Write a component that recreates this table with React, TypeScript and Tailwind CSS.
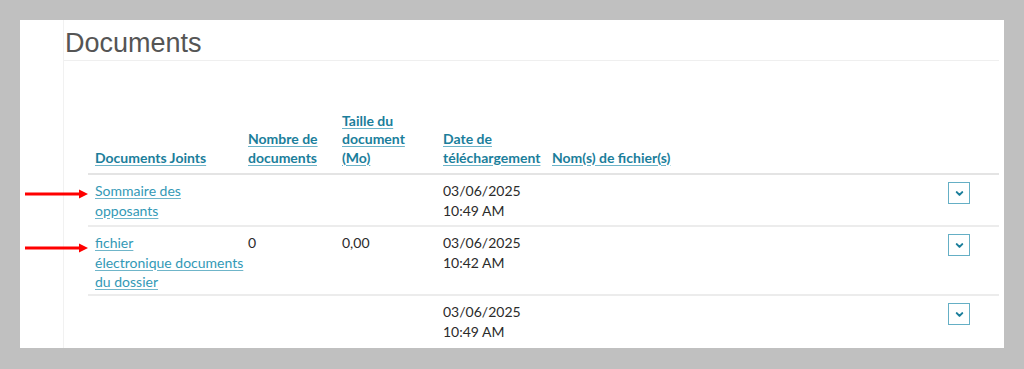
import { ChevronDown } from "lucide-react";

type Row = {
  name: string[];
  count?: string;
  size?: string;
  date: string;
  time: string;
  height: string;
};

const rows: Row[] = [
  { name: ["Sommaire des", "opposants"], date: "03/06/2025", time: "10:49 AM", height: "h-[52px]" },
  {
    name: ["fichier", "électronique documents", "du dossier"],
    count: "0",
    size: "0,00",
    date: "03/06/2025",
    time: "10:42 AM",
    height: "h-[69px]",
  },
  { name: [], date: "03/06/2025", time: "10:49 AM", height: "h-[60px]" },
];

const cols = "grid grid-cols-[153px_94px_101px_109px_1fr_58px]";

const HeaderLink = ({ lines }: { lines: string[] }) => (
  <a href="#" className="font-bold text-[#1b7e9b] underline decoration-[#6db4c8] underline-offset-2">
    {lines.map((l, i) => (
      <span key={i} className="block whitespace-nowrap">
        {l}
      </span>
    ))}
  </a>
);

const RedArrow = ({ top }: { top: string }) => (
  <div className={`absolute left-[25px] ${top}`}>
    <svg width="64" height="10" viewBox="0 0 64 10">
      <line x1="0" y1="5" x2="56" y2="5" stroke="#ff0000" strokeWidth="3" />
      <polygon points="54,0.5 63,5 54,9.5" fill="#ff0000" />
    </svg>
  </div>
);

export default function App() {
  return (
    <div className="relative w-[1024px] h-[369px] bg-[#c0c0c0] pt-5 px-5 overflow-hidden">
      <div className="flex h-[328px] bg-white overflow-hidden">
        {/* left gutter */}
        <div className="w-[44px] shrink-0 border-r border-[#f1f1f1]" />

        <div className="flex-1 pr-[5px]">
          <h1
            className="pt-[10px] pb-[3px] pl-[1px] text-[27px] leading-[27px] text-[#555555] border-b border-[#efefef]"
            style={{ fontFamily: '"Liberation Sans", Arial, sans-serif' }}
          >
            Documents
          </h1>

          <div
            className="ml-6 text-[14px] text-[#2b2b2b]"
            style={{ fontFamily: 'Lato, "Open Sans", sans-serif' }}
          >
            {/* header */}
            <div className={`${cols} h-[114px] items-end pb-[6px] leading-[18.5px] border-b-2 border-[#e4e4e4]`}>
              <div className="pl-[7px]">
                <HeaderLink lines={["Documents Joints"]} />
              </div>
              <div className="pl-[7px]">
                <HeaderLink lines={["Nombre de", "documents"]} />
              </div>
              <div className="pl-[7px]">
                <HeaderLink lines={["Taille du", "document", "(Mo)"]} />
              </div>
              <div className="pl-[7px]">
                <HeaderLink lines={["Date de", "téléchargement"]} />
              </div>
              <div className="pl-[7px]">
                <HeaderLink lines={["Nom(s) de fichier(s)"]} />
              </div>
              <div />
            </div>

            {/* rows */}
            {rows.map((r, i) => (
              <div key={i} className={`${cols} ${r.height} leading-[19.5px] border-b-2 border-[#ececec]`}>
                <div className="pl-[7px] pt-[6px]">
                  {r.name.length > 0 && (
                    <a href="#" className="text-[#3399b6] underline decoration-[#6fb5c9] underline-offset-2">
                      {r.name.map((l, j) => (
                        <span key={j} className="block whitespace-nowrap">
                          {l}
                        </span>
                      ))}
                    </a>
                  )}
                </div>
                <div className="pl-[7px] pt-[6px]">{r.count}</div>
                <div className="pl-[7px] pt-[6px]">{r.size}</div>
                <div className="pl-[7px] pt-[6px]">
                  <div>{r.date}</div>
                  <div>{r.time}</div>
                </div>
                <div />
                <div className="pl-[7px] pt-[7px]">
                  <button className="flex items-center justify-center w-[22px] h-[22px] border-[1.5px] border-[#65afc5] bg-white">
                    <ChevronDown className="w-[11px] h-[11px] text-[#1b7e9b]" strokeWidth={4.5} />
                  </button>
                </div>
              </div>
            ))}
          </div>
        </div>
      </div>

      <RedArrow top="top-[189px]" />
      <RedArrow top="top-[243px]" />
    </div>
  );
}
